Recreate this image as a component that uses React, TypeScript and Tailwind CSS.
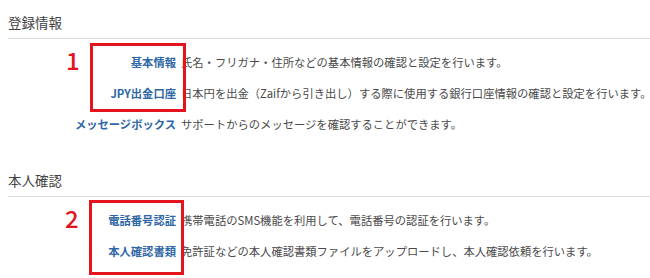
const font = { fontFamily: '"Noto Sans CJK JP", "Noto Sans", sans-serif' };

type Row = { label: string; text: string };

const profileRows: Row[] = [
  { label: "基本情報", text: "氏名・フリガナ・住所などの基本情報の確認と設定を行います。" },
  {
    label: "JPY出金口座",
    text: "日本円を出金（Zaifから引き出し）する際に使用する銀行口座情報の確認と設定を行います。",
  },
  { label: "メッセージボックス", text: "サポートからのメッセージを確認することができます。" },
];

const verifyRows: Row[] = [
  { label: "電話番号認証", text: "携帯電話のSMS機能を利用して、電話番号の認証を行います。" },
  {
    label: "本人確認書類",
    text: "免許証などの本人確認書類ファイルをアップロードし、本人確認依頼を行います。",
  },
];

function Rows({ rows }: { rows: Row[] }) {
  return (
    <div className="flex flex-col">
      {rows.map((row) => (
        <div key={row.label} className="flex h-[31px] items-center whitespace-nowrap text-[11.3px]">
          <span className="w-[168px] shrink-0 text-right font-bold text-[#2f67a6]">{row.label}</span>
          <span className="ml-[5px] text-[#4a4a4a]">{row.text}</span>
        </div>
      ))}
    </div>
  );
}

function Section({
  title,
  rows,
  marker,
  box,
  markerPos,
}: {
  title: string;
  rows: Row[];
  marker: string;
  box: string;
  markerPos: string;
}) {
  return (
    <section>
      <h2 className="h-[20px] text-[13.5px] leading-[20px] text-[#444]">{title}</h2>
      <div className="mt-[6px] mr-[-8px] h-px bg-[#dcdcdc]" />
      <div className="relative pt-[8px]">
        <Rows rows={rows} />
        <span className={`absolute text-[24px] font-medium leading-[24px] text-[#e3141e] ${markerPos}`}>
          {marker}
        </span>
        <div className={`absolute border-[3.5px] border-[#e3141e] ${box}`} />
      </div>
    </section>
  );
}

export default function App() {
  return (
    <div className="h-[278px] w-[650px] overflow-hidden bg-white px-2 pt-[12px]" style={font}>
      <Section
        title="登録情報"
        rows={profileRows}
        marker="1"
        markerPos="left-[58px] top-[9px]"
        box="left-[82px] top-[4px] h-[69px] w-[96px]"
      />
      <div className="mt-[30px]">
        <Section
          title="本人確認"
          rows={verifyRows}
          marker="2"
          markerPos="left-[57px] top-[9px]"
          box="left-[81px] top-[3px] h-[75px] w-[95px]"
        />
      </div>
    </div>
  );
}
